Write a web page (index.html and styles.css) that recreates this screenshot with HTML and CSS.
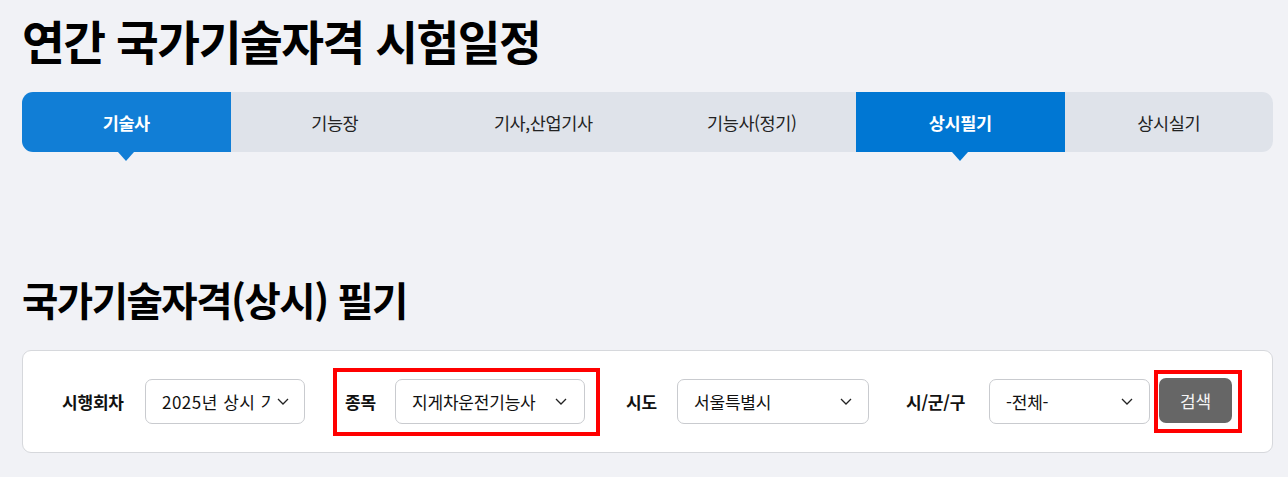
FILE: index.html
```html
<!DOCTYPE html>
<html lang="ko">
<head>
<meta charset="utf-8">
<title>연간 국가기술자격 시험일정</title>
<link rel="stylesheet" href="styles.css">
</head>
<body>
<div class="page">
  <h1 class="title">연간 국가기술자격 시험일정</h1>
  <ul class="tabs">
    <li class="tab tab-active tab-first">기술사</li>
    <li class="tab">기능장</li>
    <li class="tab">기사,산업기사</li>
    <li class="tab">기능사(정기)</li>
    <li class="tab tab-active tab-alt">상시필기</li>
    <li class="tab tab-last">상시실기</li>
  </ul>
  <h2 class="subtitle">국가기술자격(상시) 필기</h2>
  <div class="search">
    <div class="field field-round">
      <span class="label">시행회차</span>
      <div class="select select-round"><span class="select-text">2025년 상시 기술자격</span><svg class="chev" viewBox="0 0 12 7" width="12" height="7"><path d="M1 1l5 5 5-5" fill="none" stroke="#222" stroke-width="1.3"/></svg></div>
    </div>
    <div class="field field-item hl">
      <span class="label">종목</span>
      <div class="select select-item"><span class="select-text">지게차운전기능사</span><svg class="chev" viewBox="0 0 12 7" width="12" height="7"><path d="M1 1l5 5 5-5" fill="none" stroke="#222" stroke-width="1.3"/></svg></div>
    </div>
    <div class="field field-sido">
      <span class="label">시도</span>
      <div class="select select-sido"><span class="select-text">서울특별시</span><svg class="chev" viewBox="0 0 12 7" width="12" height="7"><path d="M1 1l5 5 5-5" fill="none" stroke="#222" stroke-width="1.3"/></svg></div>
    </div>
    <div class="field field-gu">
      <span class="label">시/군/구</span>
      <div class="select select-gu"><span class="select-text">-전체-</span><svg class="chev" viewBox="0 0 12 7" width="12" height="7"><path d="M1 1l5 5 5-5" fill="none" stroke="#222" stroke-width="1.3"/></svg></div>
    </div>
    <div class="btn-wrap hl">
      <button class="btn" type="button">검색</button>
    </div>
  </div>
</div>
</body>
</html>
```
FILE: styles.css
```css
* { box-sizing: border-box; }
html, body { margin: 0; padding: 0; }
body {
  background: #f1f2f6;
  font-family: "Noto Sans CJK KR", "Noto Sans", sans-serif;
  color: #111;
  width: 1288px;
  height: 477px;
  overflow: hidden;
}
.page {
  padding: 0 15px 0 22px;
}
.title {
  margin: 0;
  padding-top: 12px;
  font-size: 46.5px;
  line-height: 56px;
  font-weight: 700;
  letter-spacing: -1.5px;
  color: #000;
}
.tabs {
  list-style: none;
  margin: 24px 0 0;
  padding: 0;
  display: grid;
  grid-template-columns: repeat(6, 1fr);
  height: 60px;
}
.tab {
  position: relative;
  background: #dfe3ea;
  display: flex;
  align-items: center;
  justify-content: center;
  font-size: 17.5px;
  color: #222;
  letter-spacing: -0.4px;
}
.tab-first { border-radius: 11px 0 0 11px; }
.tab-last { border-radius: 0 11px 11px 0; }
.tab-active {
  background: #117ed6;
  color: #fff;
  font-weight: 700;
}
.tab-alt { background: #0077d3; }
.tab-active::after {
  content: "";
  position: absolute;
  left: 50%;
  top: 100%;
  margin-left: -8px;
  border-left: 8px solid transparent;
  border-right: 8px solid transparent;
  border-top: 9px solid #117ed6;
}
.tab-alt::after { border-top-color: #0077d3; }
.subtitle {
  margin: 120px 0 0;
  font-size: 39.5px;
  line-height: 54px;
  font-weight: 700;
  letter-spacing: -1.5px;
  color: #000;
}
.search {
  margin-top: 24px;
  height: 103px;
  background: #fff;
  border: 1px solid #d6d8dc;
  border-radius: 9px;
  display: flex;
  align-items: center;
  padding-left: 39px;
}
.field {
  display: flex;
  align-items: center;
}
.label {
  font-size: 17px;
  font-weight: 700;
  color: #111;
  letter-spacing: -0.2px;
}
.select {
  position: relative;
  height: 45px;
  background: #fff;
  border: 1px solid #c9cbcf;
  border-radius: 7px;
  display: flex;
  align-items: center;
  padding: 0 30px 0 16px;
  font-size: 17px;
  color: #111;
  overflow: hidden;
}
.select-text {
  white-space: nowrap;
  overflow: hidden;
  flex: 1;
  letter-spacing: -0.2px;
}
.chev {
  position: absolute;
  right: 15px;
  top: 18px;
}
.hl {
  border: 4px solid #f00;
}
.field-round .label { width: 83px; }
.select-round { width: 160px; padding-right: 33px; }
.select-round .select-text { letter-spacing: 0.5px; }
.select-round .chev { right: 15px; }
.field-item {
  margin-left: 28px;
  height: 68px;
  padding: 0 11px 0 8px;
}
.field-item .label { width: 50px; }
.select-item { width: 190px; }
.select-item .chev { right: 17px; }
.field-sido { margin-left: 26px; }
.field-sido .label { width: 51px; }
.select-sido { width: 192px; }
.select-sido .chev { right: 16px; }
.field-gu { margin-left: 37px; }
.field-gu .label { width: 83px; }
.select-gu { width: 161px; }
.select-gu .chev { right: 16px; }
.btn-wrap {
  margin-left: 4px;
  height: 63px;
  padding: 4px 6px 0 1px;
  display: flex;
  align-items: flex-start;
}
.btn {
  width: 73px;
  height: 45px;
  border: 0;
  border-radius: 7px;
  background: #666;
  color: #f4f4f4;
  font-family: inherit;
  font-size: 17px;
  padding: 0;
  letter-spacing: -0.2px;
}
```
